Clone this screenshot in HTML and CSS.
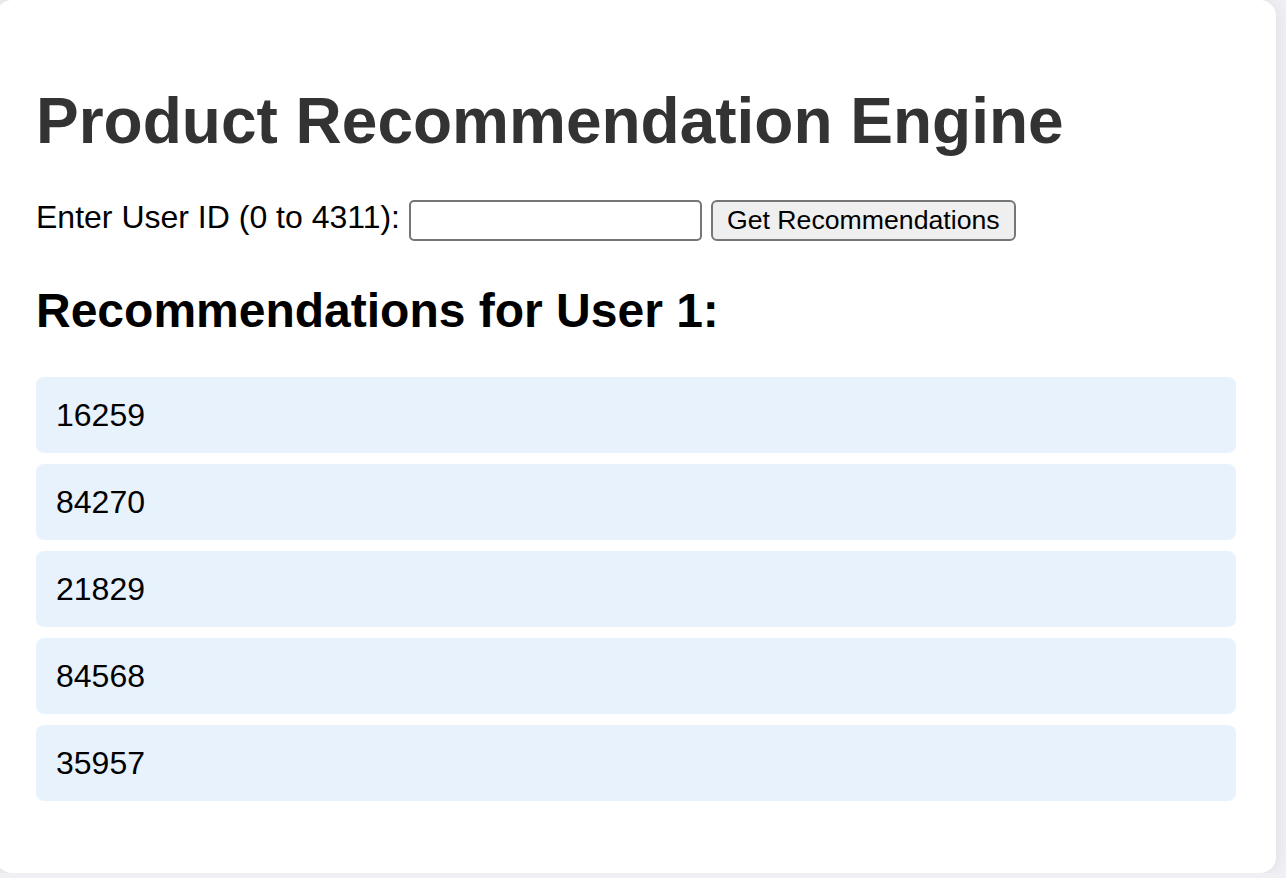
FILE: index.html
```html
<!DOCTYPE html>
<html lang="en">
<head>
<meta charset="utf-8">
<title>Product Recommendation Engine</title>
<link rel="stylesheet" href="styles.css">
</head>
<body>
<div class="container">
  <h1 class="title">Product Recommendation Engine</h1>
  <form class="lookup">
    <label class="lookup-label" for="user-id">Enter User ID (0 to 4311):</label>
    <input class="lookup-input" id="user-id" type="text">
    <button class="lookup-button" type="button">Get Recommendations</button>
  </form>
  <h2 class="subtitle">Recommendations for User 1:</h2>
  <ul class="recs">
    <li class="rec">16259</li>
    <li class="rec">84270</li>
    <li class="rec">21829</li>
    <li class="rec">84568</li>
    <li class="rec">35957</li>
  </ul>
</div>
</body>
</html>
```

FILE: styles.css
```css
html, body {
  margin: 0;
  padding: 0;
}
body {
  background: #f0f0f4;
  font-family: "Liberation Sans", Arial, Helvetica, sans-serif;
  font-size: 32px;
  color: #000;
  overflow: hidden;
}
.container {
  box-sizing: border-box;
  width: 1280px;
  margin: 0 0 0 -4px;
  padding: 40px;
  background: #fff;
  border-radius: 16px;
  box-shadow: 0 0 16px rgba(0, 0, 0, 0.08);
}
.title {
  margin: 44px 0 38.5px;
  font-size: 64px;
  font-weight: bold;
  color: #333;
  line-height: normal;
}
.lookup {
  display: flex;
  align-items: flex-start;
  gap: 9px;
  margin: 0;
}
.lookup-label {
  margin-top: 2px;
  line-height: normal;
}
.lookup-input {
  box-sizing: border-box;
  width: 293px;
  height: 41px;
  margin: 3px 0 0;
  border: 2px solid #767676;
  border-radius: 5px;
  padding: 0 6px;
  font-family: "Liberation Sans", Arial, sans-serif;
  font-size: 26.67px;
  background: #fff;
}
.lookup-button {
  box-sizing: border-box;
  height: 41px;
  margin: 3px 0 0;
  padding: 0 14px;
  border: 2px solid #767676;
  border-radius: 6px;
  background: #efefef;
  font-family: "Liberation Sans", Arial, sans-serif;
  font-size: 26.67px;
  color: #000;
}
.subtitle {
  margin: 42px 0 39px;
  font-size: 48px;
  font-weight: bold;
  line-height: normal;
}
.recs {
  list-style: none;
  margin: 0 0 32px;
  padding: 0;
  display: flex;
  flex-direction: column;
  gap: 11px;
}
.rec {
  padding: 20px;
  line-height: 36px;
  background: #e8f2fd;
  border-radius: 8px;
}
```
